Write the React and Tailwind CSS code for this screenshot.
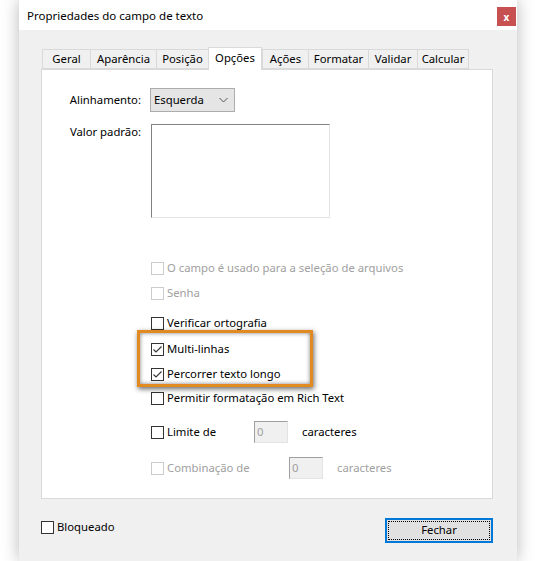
import React from "react";

const Check = ({ checked, disabled }) => (
  <span
    className={`inline-flex items-center justify-center w-[13px] h-[13px] shrink-0 bg-white border ${
      disabled ? "border-[#cccccc]" : "border-[#333333]"
    }`}
  >
    {checked && (
      <svg width="11" height="11" viewBox="0 0 11 11">
        <polyline points="1.5,5.5 4,8 9.5,2.5" fill="none" stroke="#333" strokeWidth="1.1" />
      </svg>
    )}
  </span>
);

const Row = ({ mt, h = "h-[16px]", checked, disabled, children }) => (
  <div className={`flex items-center ${h} ${mt}`}>
    <Check checked={checked} disabled={disabled} />
    <div className={`ml-[3px] flex items-center ${disabled ? "text-[#a0a0a0]" : "text-black"}`}>{children}</div>
  </div>
);

const NumBox = () => (
  <div className="w-[34px] h-[22px] bg-[#f0f0f0] border border-t-[#a0a0a0] border-l-[#a0a0a0] border-r-[#e3e3e3] border-b-[#e3e3e3] text-[#a0a0a0] pl-[2px] leading-[20px]">
    0
  </div>
);

const tabs = [
  ["Geral", "w-[48px]"],
  ["Aparência", "w-[66px]"],
  ["Posição", "w-[52px]"],
  ["Opções", "w-[54px]"],
  ["Ações", "w-[46px]"],
  ["Formatar", "w-[60px]"],
  ["Validar", "w-[49px]"],
  ["Calcular", "w-[52px]"],
];

export default function App() {
  return (
    <div className="relative w-[535px] h-[561px] bg-white overflow-hidden font-['Noto_Sans',sans-serif] text-[11.3px] text-black">
      <div className="ml-[19px] w-[498px] h-[561px] flex flex-col shadow-[0_0_16px_rgba(0,0,0,0.28)]">
        {/* title bar */}
        <div className="h-[30px] bg-white flex items-start justify-between pl-[8px] pr-[1px]">
          <div className="mt-[7px] text-[11.5px]">Propriedades do campo de texto</div>
          <div className="mt-[7px] w-[19px] h-[19px] bg-[#c75050] flex items-center justify-center text-white text-[10px] font-bold leading-none">
            x
          </div>
        </div>
        {/* body */}
        <div className="flex-1 bg-[#f0f0f0] pt-[17px] pl-[22px] pr-[24px]">
          <div className="flex items-end h-[22px] pl-[1px]">
            {tabs.map(([t, w]) =>
              t === "Opções" ? (
                <div
                  key={t}
                  className={`${w} h-[23px] -mb-[1px] relative z-10 bg-white border border-[#d9d9d9] border-b-0 flex items-start pt-[2px] justify-center`}
                >
                  {t}
                </div>
              ) : (
                <div
                  key={t}
                  className={`${w} h-[20px] bg-[#f0f0f0] border border-[#d9d9d9] border-r-0 last:border-r flex items-center justify-center`}
                >
                  {t}
                </div>
              )
            )}
          </div>
          <div className="h-[430px] bg-white border border-[#d9d9d9] pl-[109px] pr-[10px]">
            <div className="grid grid-cols-[99px_1fr] gap-x-[9px] -ml-[109px] mt-[18px] items-start">
              <div className="h-[24px] flex items-center justify-end">Alinhamento:</div>
              <div className="w-[85px] h-[24px] bg-[#e5e5e5] border border-[#adadad] flex items-center justify-between pl-[3px] pr-[6px]">
                <span>Esquerda</span>
                <svg width="9" height="6" viewBox="0 0 9 6">
                  <polyline points="0.5,1 4.5,5 8.5,1" fill="none" stroke="#555" strokeWidth="1" />
                </svg>
              </div>
              <div className="mt-[12px] text-right leading-[16px]">Valor padrão:</div>
              <div className="mt-[12px] w-[179px] h-[94px] bg-white border border-t-[#828282] border-l-[#828282] border-r-[#e3e3e3] border-b-[#e3e3e3] ml-[1px]" />
            </div>
            <Row mt="mt-[42px]" disabled>
              O campo é usado para a seleção de arquivos
            </Row>
            <Row mt="mt-[9px]" disabled>
              Senha
            </Row>
            <Row mt="mt-[14px]">Verificar ortografia</Row>
            <Row mt="mt-[10px]" checked>
              Multi-linhas
            </Row>
            <Row mt="mt-[9px]" checked>
              Percorrer texto longo
            </Row>
            <Row mt="mt-[8px]">Permitir formatação em Rich Text</Row>
            <Row mt="mt-[15px]" h="h-[22px]">
              <span className="w-[87px]">Limite de</span>
              <NumBox />
              <span className="ml-[14px]">caracteres</span>
            </Row>
            <Row mt="mt-[14px]" h="h-[22px]" disabled>
              <span className="w-[122px]">Combinação de</span>
              <NumBox />
              <span className="ml-[14px]">caracteres</span>
            </Row>
          </div>
          <div className="mt-[19px] flex items-start justify-between">
            <div className="mt-[1px] h-[16px] flex items-center">
              <Check />
              <span className="ml-[3px]">Bloqueado</span>
            </div>
            <div className="w-[108px] h-[25px] bg-[#e1e1e1] border-2 border-[#0078d7] p-[1px]">
              <div className="w-full h-full border border-dotted border-black flex items-center justify-center">Fechar</div>
            </div>
          </div>
        </div>
      </div>
      <div className="absolute left-[137px] top-[330px] w-[176px] h-[57px] border-[3px] border-[#e28a22] shadow-[1px_2px_5px_rgba(0,0,0,0.6),inset_0_0_4px_rgba(0,0,0,0.5)]" />
    </div>
  );
}
